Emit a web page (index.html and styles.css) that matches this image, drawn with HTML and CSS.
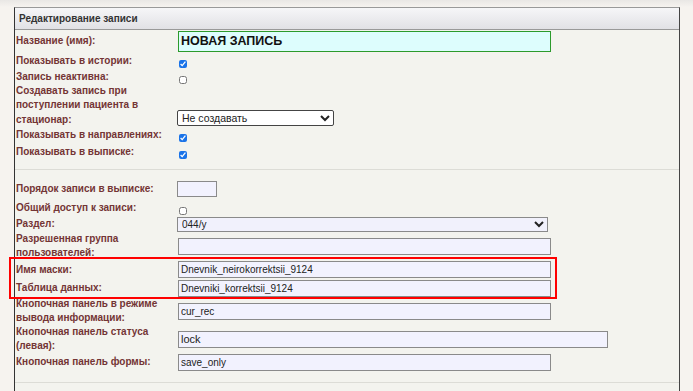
FILE: index.html
```html
<!DOCTYPE html>
<html lang="ru">
<head>
    <meta charset="UTF-8">
    <meta name="viewport" content="width=device-width, initial-scale=1.0">
    <title>Редактирование записи</title>
    <link rel="stylesheet" href="styles.css">
</head>
<body>

<div class="page">
    <div class="panel">
        <div class="panel-head">Редактирование записи</div>

        <table class="form">
            <tr class="h22">
                <td class="lbl">Название (имя):</td>
                <td><input type="text" class="name-input" value="НОВАЯ ЗАПИСЬ"></td>
            </tr>
            <tr class="h17">
                <td class="lbl">Показывать в истории:</td>
                <td><input type="checkbox" checked></td>
            </tr>
            <tr class="h15">
                <td class="lbl">Запись неактивна:</td>
                <td><input type="checkbox"></td>
            </tr>
            <tr class="r-bottom">
                <td class="lbl lbl-3">Создавать запись при поступлении пациента в стационар:</td>
                <td>
                    <select class="sel-white">
                        <option>Не создавать</option>
                    </select>
                </td>
            </tr>
            <tr class="h16">
                <td class="lbl">Показывать в направлениях:</td>
                <td><input type="checkbox" checked></td>
            </tr>
            <tr class="h17">
                <td class="lbl">Показывать в выписке:</td>
                <td><input type="checkbox" checked></td>
            </tr>
            <tr class="r-sep"><td colspan="2"><hr></td></tr>

            <tr class="h22">
                <td class="lbl">Порядок записи в выписке:</td>
                <td><input type="text" class="short-input"></td>
            </tr>
            <tr class="h16">
                <td class="lbl">Общий доступ к записи:</td>
                <td><input type="checkbox"></td>
            </tr>
            <tr class="h16">
                <td class="lbl">Раздел:</td>
                <td>
                    <select class="sel-grey">
                        <option>044/у</option>
                    </select>
                </td>
            </tr>
            <tr class="h27">
                <td class="lbl">Разрешенная группа пользователей:</td>
                <td><input type="text" class="txt"></td>
            </tr>
            <tr class="h19">
                <td class="lbl">Имя маски:</td>
                <td><input type="text" class="txt" value="Dnevnik_neirokorrektsii_9124"></td>
            </tr>
            <tr class="h18">
                <td class="lbl">Таблица данных:</td>
                <td><input type="text" class="txt" value="Dnevniki_korrektsii_9124"></td>
            </tr>
            <tr class="h28">
                <td class="lbl">Кнопочная панель в режиме вывода информации:</td>
                <td><input type="text" class="txt" value="cur_rec"></td>
            </tr>
            <tr class="h28">
                <td class="lbl">Кнопочная панель статуса (левая):</td>
                <td><input type="text" class="txt wide big" value="lock"></td>
            </tr>
            <tr class="h18">
                <td class="lbl">Кнопочная панель формы:</td>
                <td><input type="text" class="txt" value="save_only"></td>
            </tr>
            <tr class="r-sep r-sep-last"><td colspan="2"><hr></td></tr>
        </table>
    </div>

    <!-- выделение полей маски и таблицы -->
    <div class="mark"></div>
</div>

</body>
</html>
```

FILE: styles.css
```css
body {
    margin: 0;
    font-family: "Liberation Sans", Arial, sans-serif;
    background-color: #f6f3ef;
}

.page {
    position: relative;
    padding: 7px 0 0 14px;
    height: 384px;
    overflow: hidden;
    background: linear-gradient(to bottom, #e9e7e5 0, #f6f3ef 7px);
}

.panel {
    width: 666px;
    box-sizing: border-box;
    border-left: 1px solid #333;
    border-right: 1px solid #444;
    border-top: 1px solid #999;
    background-color: #f3f3ee;
    height: 400px;
}

.panel-head {
    height: 21px;
    line-height: 21px;
    padding-left: 4px;
    font-size: 10px;
    font-weight: bold;
    color: #333;
    background: linear-gradient(to bottom, #f6f6f8, #e1e1e5);
    border-bottom: 1px solid #999;
}

.form {
    border-collapse: collapse;
    width: 100%;
    font-size: 10px;
    line-height: 14px;
}

.form td {
    padding: 0;
    vertical-align: middle;
}

.lbl {
    width: 161px;
    padding-left: 1px !important;
    font-weight: bold;
    color: #733535;
}

.lbl-3 {
    line-height: 14.4px;
}

.h15 td { height: 15px; }
.h16 td { height: 16px; }
.h17 td { height: 17px; }
.h18 td { height: 18px; }
.h19 td { height: 19px; }
.h22 td { height: 22px; }
.h27 td { height: 27px; }
.h28 td { height: 28px; }

.r-bottom td {
    height: 43px;
    vertical-align: bottom;
}

.r-bottom select {
    margin-bottom: 1px;
}

.r-sep td {
    height: 18px;
}

.r-sep-last td {
    height: 22px;
}

.form hr {
    margin: 0;
    border: 0;
    border-top: 1px solid #dcdcd6;
}

input[type="text"] {
    box-sizing: border-box;
    margin: 0;
    font-family: "Liberation Sans", Arial, sans-serif;
    font-size: 10px;
    color: #222;
    padding: 0 2px;
    vertical-align: middle;
}

input[type="checkbox"] {
    width: 8px;
    height: 8px;
    margin: 6px 0 0 2px;
    vertical-align: middle;
    accent-color: #1a73e8;
}

.name-input {
    width: 373px;
    height: 21px;
    margin-left: 1px !important;
    border: 1px solid #2c9a2c;
    background-color: #ddfdfd;
    font-size: 12.5px !important;
    font-weight: bold;
    color: #111 !important;
}

.txt {
    width: 373px;
    height: 17px;
    margin-left: 1px !important;
    border: 1px solid #8a8a8a;
    background-color: #f2f2fe;
}

.wide {
    width: 430px;
}

.big {
    font-size: 11px !important;
}

.short-input {
    width: 40px;
    height: 16px;
    border: 1px solid #8a8a8a;
    background-color: #f2f2fe;
}

select {
    margin: 0;
    font-family: "Liberation Sans", Arial, sans-serif;
    font-size: 10px;
    color: #222;
    vertical-align: middle;
}

.sel-white {
    width: 157px;
    height: 16px;
    font-size: 10.5px;
    background-color: #fff;
    border: 1px solid #444;
    border-radius: 2px;
}

.sel-grey {
    width: 371px;
    height: 15px;
    background-color: #f1f1fc;
    border: 1px solid #8a8a8a;
    border-radius: 0;
}

.mark {
    position: absolute;
    left: 9px;
    top: 257px;
    width: 548px;
    height: 42px;
    box-sizing: border-box;
    border: 2px solid #f00;
}
```
